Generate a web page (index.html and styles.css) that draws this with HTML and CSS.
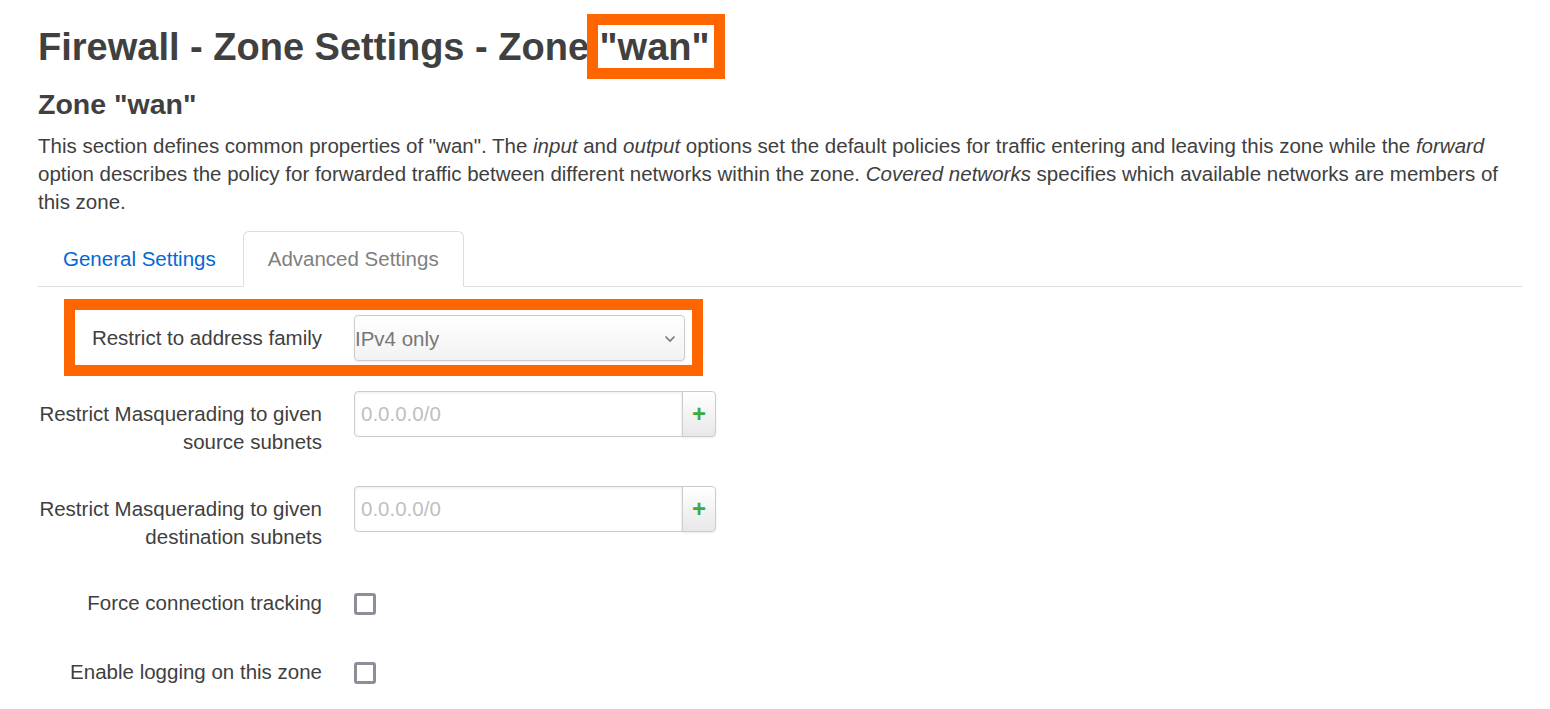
FILE: index.html
```html
<!DOCTYPE html>
<html lang="en">

<head>
    <meta charset="UTF-8">
    <title>Firewall - Zone Settings</title>
    <link rel="stylesheet" href="styles.css">
</head>

<body>
    <div class="main">
        <!-- Page title -->
        <h2 class="page-title">Firewall - Zone Settings - Zone<span class="mark"> "wan"</span></h2>

        <!-- Zone section -->
        <h3 class="section-title">Zone "wan"</h3>
        <p class="section-descr">This section defines common properties of "wan". The <em>input</em> and <em>output</em> options set the default policies for traffic entering and leaving this zone while the <em>forward</em> option describes the policy for forwarded traffic between different networks within the zone. <em>Covered networks</em> specifies which available networks are members of this zone.</p>

        <ul class="tabs">
            <li><a href="#general">General Settings</a></li>
            <li class="active"><a href="#advanced">Advanced Settings</a></li>
        </ul>

        <div class="tab-pane">
            <div class="form-row marked">
                <label class="form-label" for="family">Restrict to address family</label>
                <div class="form-field">
                    <div class="select-wrap">
                        <select id="family" class="form-select">
                            <option>IPv4 only</option>
                            <option>IPv6 only</option>
                            <option>IPv4 and IPv6</option>
                        </select>
                        <svg class="chevron" width="12" height="8" viewBox="0 0 12 8">
                            <path d="M1.5 1.5 L6 6 L10.5 1.5" fill="none" stroke="#777" stroke-width="1.6"/>
                        </svg>
                    </div>
                </div>
            </div>

            <div class="form-row">
                <label class="form-label" for="msrc">Restrict Masquerading to given source subnets</label>
                <div class="form-field input-group">
                    <input type="text" id="msrc" placeholder="0.0.0.0/0">
                    <button type="button" class="btn-add">+</button>
                </div>
            </div>

            <div class="form-row">
                <label class="form-label" for="mdest">Restrict Masquerading to given destination subnets</label>
                <div class="form-field input-group">
                    <input type="text" id="mdest" placeholder="0.0.0.0/0">
                    <button type="button" class="btn-add">+</button>
                </div>
            </div>

            <div class="form-row check-row">
                <label class="form-label" for="conntrack">Force connection tracking</label>
                <div class="form-field check-field">
                    <input type="checkbox" id="conntrack" class="checkbox">
                </div>
            </div>

            <div class="form-row check-row">
                <label class="form-label" for="log">Enable logging on this zone</label>
                <div class="form-field check-field">
                    <input type="checkbox" id="log" class="checkbox">
                </div>
            </div>
        </div>
    </div>
</body>

</html>
```

FILE: styles.css
```css
/* General Styling */
body {
    margin: 0;
    font-family: "Liberation Sans", Arial, sans-serif;
    font-size: 20.5px;
    line-height: 28px;
    color: #404040;
    background-color: #fff;
}

.main {
    padding: 0 28px 0 38px;
}

/* Headings */
.page-title {
    margin: 24px 0 16px;
    font-size: 38px;
    line-height: 46px;
    font-weight: bold;
}

.mark {
    position: relative;
}

.mark::after {
    content: "";
    position: absolute;
    left: -2px;
    right: -15px;
    top: -12px;
    bottom: -11px;
    border: 11px solid #ff6600;
}

.section-title {
    margin: 0 0 10px;
    font-size: 28.5px;
    line-height: 36px;
    font-weight: bold;
}

.section-descr {
    margin: 0 0 15px;
}

/* Tabs */
.tabs {
    display: flex;
    margin: 0;
    padding: 0;
    list-style: none;
    border-bottom: 1px solid #ddd;
}

.tabs li {
    margin-right: 2px;
    margin-bottom: -1px;
}

.tabs a {
    display: block;
    padding: 13px 24px;
    border: 1px solid transparent;
    border-radius: 6px 6px 0 0;
    color: #0069d6;
    text-decoration: none;
}

.tabs .active a {
    color: #808080;
    border-color: #ddd #ddd #fff;
    background-color: #fff;
}

/* Form rows */
.tab-pane {
    padding-top: 28px;
}

.form-row {
    display: flex;
    gap: 32px;
    margin-bottom: 29.5px;
}

.check-row {
    min-height: 39px;
}

.form-label {
    width: 290px;
    margin-left: -6px;
    flex-shrink: 0;
    padding-top: 9px;
    text-align: right;
}

.marked {
    position: relative;
    margin-bottom: 30px;
}

.marked::after {
    content: "";
    position: absolute;
    left: 26px;
    width: 617px;
    top: -16px;
    bottom: -15px;
    border: 11px solid #ff6600;
}

/* Select */
.select-wrap {
    position: relative;
    width: 331px;
}

.form-select {
    display: block;
    width: 100%;
    height: 46px;
    padding: 0;
    border: 1px solid #ccc;
    border-radius: 4px;
    background: linear-gradient(#fff, #f2f2f2);
    box-shadow: 0 1px 2px rgba(0, 0, 0, 0.08);
    font-family: inherit;
    font-size: 20.5px;
    color: #777;
    appearance: none;
    -webkit-appearance: none;
}

.chevron {
    position: absolute;
    right: 9px;
    top: 20px;
}

/* Dynamic list inputs */
.input-group {
    display: flex;
    height: 46px;
}

.input-group input {
    width: 329px;
    height: 46px;
    box-sizing: border-box;
    padding: 0 6px;
    border: 1px solid #ccc;
    border-radius: 4px 0 0 4px;
    box-shadow: inset 0 1px 3px rgba(0, 0, 0, 0.08);
    font-family: inherit;
    font-size: 20.5px;
    color: #404040;
}

.input-group input::placeholder {
    color: #bfbfbf;
}

.btn-add {
    width: 34px;
    height: 46px;
    margin-left: -1px;
    padding: 0;
    border: 1px solid #ccc;
    border-radius: 0 4px 4px 0;
    background: linear-gradient(#fff, #e8e8e8);
    box-shadow: 0 1px 2px rgba(0, 0, 0, 0.08);
    font-family: inherit;
    font-size: 24px;
    font-weight: bold;
    color: #3daa3d;
    cursor: pointer;
}

/* Checkboxes */
.check-field {
    padding-top: 13px;
}

.checkbox {
    display: block;
    width: 22px;
    height: 22px;
    margin: 0;
    border: 3px solid #8f8d9a;
    border-radius: 3px;
    background: #fff;
    appearance: none;
    -webkit-appearance: none;
}
```
